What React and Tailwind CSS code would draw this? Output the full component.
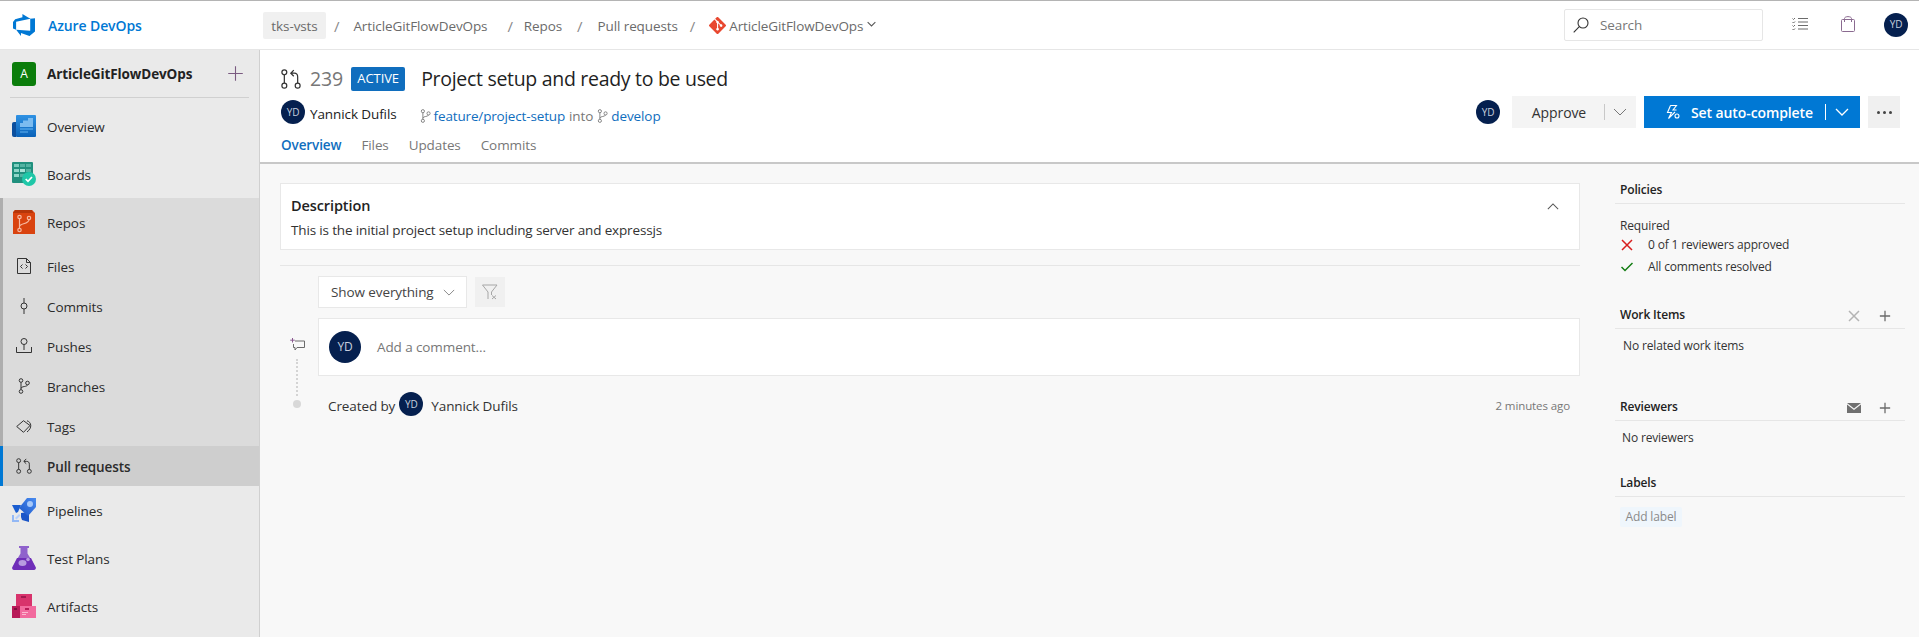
import React from "react";

const Avatar = ({ size = "w-6 h-6 text-[10px]" }) => (
  <div className={`${size} rounded-full bg-[#05204f] text-[#c8d0de] flex items-center justify-center shrink-0`}>YD</div>
);

const PrIcon = ({ className, color = "#333" }) => (
  <svg viewBox="0 0 18 18" className={className} fill="none" stroke={color} strokeWidth="1.100">
    <circle cx="3" cy="3" r="2.200" />
    <circle cx="3" cy="15" r="2.200" />
    <circle cx="15" cy="15" r="2.200" />
    <path d="M3 5.200v7.600M15 12.800V7C15 5 14 3.800 12 3.800H9M11.500 1 8.800 3.800l2.700 2.700" />
  </svg>
);

const BranchIcon = ({ className, color = "#666" }) => (
  <svg viewBox="0 0 12 16" className={className} fill="none" stroke={color} strokeWidth="1">
    <circle cx="3" cy="2.500" r="1.800" />
    <circle cx="3" cy="13.500" r="1.800" />
    <circle cx="9.500" cy="5" r="1.800" />
    <path d="M3 4.300v7.400M3 10.500c0-2.500 6.500-1.500 6.500-3.700" />
  </svg>
);

const Chevron = ({ className, color = "#666", w = 1 }) => (
  <svg viewBox="0 0 14 8" className={className} fill="none" stroke={color} strokeWidth={w}>
    <path d="M1 1l6 6 6-6" />
  </svg>
);

const PlusIcon = ({ className, color = "#6b6b6b", w = 1.5 }) => (
  <svg viewBox="0 0 14 14" className={className} fill="none" stroke={color} strokeWidth={w}>
    <path d="M7 1v12M1 7h12" />
  </svg>
);

const Crumb = ({ children }) => <span className="text-[#6b6b6b] pt-[2px]">{children}</span>;
const Slash = ({ className }) => <span className={`text-[#8a8a8a] text-[15px] pt-[2px] ${className}`}>/</span>;

const OverviewIcon = () => (
  <svg viewBox="0 0 24 22" className="w-6 h-[22px]">
    <defs>
      <linearGradient id="ovg" x1="0" y1="0" x2="0" y2="1">
        <stop offset="0" stopColor="#2f92e4" />
        <stop offset="1" stopColor="#0a62b8" />
      </linearGradient>
    </defs>
    <rect x="4" width="20" height="22" rx="1" fill="url(#ovg)" />
    <path d="M0 9a2 2 0 0 1 2-2h2v15H2a2 2 0 0 1-2-2z" fill="#0b4f9e" />
    <path d="M16 3h5v9H8V8h3V5.500h5z" fill="#7cbcf0" />
    <rect x="8" y="13" width="13" height="2" fill="#3f97e0" />
    <rect x="8" y="16" width="8" height="2" fill="#3a8fd8" />
  </svg>
);
const BoardsIcon = () => (
  <svg viewBox="0 0 24 24" className="w-6 h-6">
    <rect width="21" height="21" rx="1" fill="#20907e" />
    <rect x="2" y="2" width="5" height="3" fill="#7ccdbe" />
    <rect x="8" y="2" width="5" height="3" fill="#52b3a2" />
    <rect x="14" y="2" width="5" height="3" fill="#52b3a2" />
    <rect x="2" y="7" width="5" height="3" fill="#8ed6c9" />
    <rect x="8" y="7" width="5" height="3" fill="#a6e2d7" />
    <rect x="14" y="7" width="5" height="3" fill="#52b3a2" />
    <rect x="2" y="12" width="5" height="3" fill="#8ed6c9" />
    <rect x="8" y="12" width="5" height="3" fill="#52b3a2" />
    <circle cx="17" cy="17" r="7" fill="#1fc7a8" />
    <path d="M13.700 17l2.300 2.300 4-4.300" stroke="#fff" strokeWidth="1.700" fill="none" />
  </svg>
);
const ReposIcon = () => (
  <svg viewBox="0 0 22 24" className="w-[22px] h-6">
    <path d="M2 0h17l3 3v21H0V2z" fill="#d9430f" />
    <path d="M2 0h17l1 3H0z" fill="#b5360a" />
    <g fill="none" stroke="#f7b9a2" strokeWidth="1.200">
      <circle cx="6.500" cy="7" r="1.700" />
      <circle cx="6.500" cy="20" r="1.700" />
      <circle cx="16" cy="8" r="1.700" />
      <path d="M6.500 8.700v9.600M6.500 16.500c0-3 9.500-2.500 9.500-6.800" />
    </g>
  </svg>
);
const FilesIcon = () => (
  <svg viewBox="0 0 14 16" className="w-[14px] h-4" fill="none" stroke="#333" strokeWidth="1">
    <path d="M.5.500h9l4 4v11H.5zM9.500.500v4h4" />
    <path d="M5.500 6.500 3.500 8.500l2 2M8.500 6.500l2 2-2 2" />
  </svg>
);
const CommitsIcon = () => (
  <svg viewBox="0 0 8 16" className="w-2 h-4" fill="none" stroke="#333" strokeWidth="1">
    <circle cx="4" cy="8" r="3" />
    <path d="M4 0v5M4 11v5" />
  </svg>
);
const PushesIcon = () => (
  <svg viewBox="0 0 16 16" className="w-4 h-4" fill="none" stroke="#333" strokeWidth="1">
    <circle cx="8" cy="3.500" r="3" />
    <path d="M8 6.500V12M.5 9v5.500h15V9" />
  </svg>
);
const TagsIcon = () => (
  <svg viewBox="0 0 16 13" className="w-4 h-[13px]" fill="none" stroke="#333" strokeWidth="1">
    <path d="M.7 6.500 7.500.7 14 5.500 7.500 12.300z" />
    <path d="M11 .8c4.500 1.200 5.500 7.200 0 11.200" />
  </svg>
);
const PipelinesIcon = () => (
  <svg viewBox="0 0 24 24" className="w-6 h-6">
    <defs>
      <linearGradient id="pig" x1="1" y1="0" x2="0" y2="1">
        <stop offset="0" stopColor="#4a8cf0" />
        <stop offset="1" stopColor="#1a55c8" />
      </linearGradient>
    </defs>
    <path d="M0 7h9l-3 7-2 1z" fill="#1a5dd0" />
    <path d="M9 15l8-1v10l-7-2-1-3z" fill="#1a55c8" />
    <path d="M24 0v9l-8 9-9-8 8-10z" fill="url(#pig)" />
    <circle cx="18" cy="6" r="3" fill="#a6c8fa" />
    <path d="M0 17v7h7v-2H2v-5z" fill="#93b8f5" />
    <path d="M3 20l4-4 1.500 1.500-4 4z" fill="#b8d0fa" />
  </svg>
);
const TestIcon = () => (
  <svg viewBox="0 0 24 24" className="w-6 h-6">
    <path d="M7 0h10v2h-1.500v5.500L23.500 21c.7 1.500-.3 3-2 3h-19c-1.700 0-2.700-1.500-2-3L8.500 7.500V2H7z" fill="#8f62cc" />
    <path d="M5 12h14l4.500 9c.7 1.500-.3 3-2 3h-19c-1.700 0-2.700-1.500-2-3z" fill="#6f2eb8" />
    <ellipse cx="10.500" cy="17" rx="4" ry="3" fill="#b89be0" />
    <circle cx="16" cy="13.500" r="1.800" fill="#b89be0" />
  </svg>
);
const ArtifactsIcon = () => (
  <svg viewBox="0 0 24 24" className="w-6 h-6">
    <rect x="4" width="16" height="12" fill="#d8336c" />
    <rect y="12" width="8" height="12" fill="#b81a58" />
    <rect x="8" y="12" width="16" height="12" fill="#f26a9e" />
    <rect x="9" y="2" width="5" height="2" fill="#a01a4e" />
    <rect x="13" y="14" width="4" height="2" fill="#b81a58" />
    <rect x="10" y="18" width="6" height="1" fill="#fbb8d0" />
    <rect x="10" y="20" width="4" height="1" fill="#fbb8d0" />
    <rect x="2" y="14" width="3" height="2" fill="#7e0f3c" />
  </svg>
);

const NavItem = ({ icon, label, h = "h-12", active, weight, strip }) => (
  <div className={`${h} flex items-center ${active ? "bg-[#cecece] border-l-[3px] border-[#0078d4]" : strip ? "border-l-[3px] border-[#aeaeae]" : "border-l-[3px] border-transparent"}`}>
    <div className="w-[44px] pl-[9px] flex items-center shrink-0">
      <span className="w-6 flex items-center justify-center">{icon}</span>
    </div>
    <span className={`text-[#2b2b2b] pt-[2px] ${weight || ""}`}>{label}</span>
  </div>
);

const Section = ({ title, actions, className, children }) => (
  <div className={className}>
    <div className="h-[24px] border-b border-[#e6e6e6] flex items-center justify-between">
      <span className="font-semibold text-[12px] text-[#222] pl-[5px] pb-[4px]">{title}</span>
      {actions}
    </div>
    {children}
  </div>
);

export default function App() {
  return (
    <div className="h-[637px] w-full overflow-hidden flex flex-col bg-[#f8f8f8] font-['Open_Sans','Liberation_Sans',sans-serif] text-[13.500px] tracking-[-0.1px] text-[#333]">
      {/* Top bar */}
      <header className="h-[50px] shrink-0 bg-white border-t border-t-[#b4b4b4] border-b border-b-[#e6e6e6] flex items-center">
        <div className="w-[263px] shrink-0 flex items-center pl-[13px]">
          <svg viewBox="1 1 16 16" className="w-[22px] h-[22px]" fill="#0078d4">
            <path d="M17 4v9.740l-4 3.280-6.200-2.260V17L3.290 12.410l10.230.8V4.440Zm-3.410.49L7.850 1V3.290L2.580 4.840 1 6.870v4.610l2.260 1V6.570Z" />
          </svg>
          <span className="ml-[13px] font-semibold text-[14px] text-[#0078d4] pt-[1px]">Azure DevOps</span>
        </div>
        <div className="flex items-center flex-1">
          <div className="w-[63px] h-[27px] bg-[#f0f0f0] rounded-[2px] flex items-center justify-center"><Crumb>tks-vsts</Crumb></div>
          <Slash className="ml-[8px] mr-[14px]" />
          <Crumb>ArticleGitFlowDevOps</Crumb>
          <Slash className="ml-[20px] mr-[11px]" />
          <Crumb>Repos</Crumb>
          <Slash className="ml-[15px] mr-[15px]" />
          <Crumb>Pull requests</Crumb>
          <Slash className="ml-[12px] mr-[14px]" />
          <svg viewBox="0 0 92 92" className="w-[17px] h-[17px] mr-[3px]">
            <path fill="#e8472f" d="M90.200 41.900 50.100 1.800a5.900 5.900 0 0 0-8.400 0L33.400 10.100l10.600 10.600a7 7 0 0 1 8.900 8.900l10.200 10.200a7 7 0 1 1-4.200 4l-9.500-9.500v25a7 7 0 1 1-5.800-.2V33.900a7 7 0 0 1-3.800-9.200L29.300 14.200 1.800 41.700a5.900 5.900 0 0 0 0 8.400l40.100 40.100a5.900 5.900 0 0 0 8.400 0l39.900-39.900a5.900 5.900 0 0 0 0-8.400z" />
          </svg>
          <Crumb>ArticleGitFlowDevOps</Crumb>
          <Chevron className="w-[9px] h-[6px] ml-[4px] -mt-[3px]" color="#555" w={1.6} />
        </div>
        <div className="w-[199px] h-[32px] border border-[#e6e6e6] rounded-[2px] flex items-center pl-[8px] mr-[29px]">
          <svg viewBox="0 0 16 16" className="w-4 h-4" fill="none" stroke="#333" strokeWidth="1.100">
            <circle cx="10" cy="6" r="5" />
            <path d="M6.300 9.700.7 15.300" />
          </svg>
          <span className="ml-[11px] text-[#777] pt-[1px]">Search</span>
        </div>
        <svg viewBox="0 0 16 14" className="w-4 h-[14px] mr-[33px] -mt-[2px]" fill="none" stroke="#6b6b6b" strokeWidth="1">
          <path d="M6 1.500h10M6 5h10M6 8.500h10M6 12h10" />
          <path d="M.5 1.500l1 1 1.500-1.500M.5 5l1 1 1.500-1.500M.5 8.500l1 1L3 8M.5 12l1 1 1.500-1.500" />
        </svg>
        <svg viewBox="0 0 14 16" className="w-[14px] h-4 mr-[29px] -mt-[2px]" fill="none" stroke="#8a6a90" strokeWidth="1">
          <rect x=".5" y="3.500" width="13" height="12" rx="1" />
          <path d="M3.500 6V2.500c0-2.500 7-2.500 7 0V6" />
        </svg>
        <div className="mr-[11px] -mt-[1px]"><Avatar /></div>
      </header>

      <div className="flex flex-1 min-h-0">
        {/* Sidebar */}
        <aside className="w-[260px] shrink-0 bg-[#eaeaea] border-r border-[#d0d0d0] flex flex-col">
          <div className="h-[48px] mx-[10px] mb-[4px] border-b border-[#d0d0d0] flex items-center shrink-0">
            <div className="w-6 h-6 ml-[2px] bg-[#0b7d0b] rounded-[3px] text-white flex items-center justify-center text-[12px]">A</div>
            <span className="ml-[11px] font-bold text-[#222] flex-1 pt-[1px]">ArticleGitFlowDevOps</span>
            <PlusIcon className="w-[17px] h-[17px] mr-[5px]" color="#7a5a80" w={0.9} />
          </div>
          <NavItem icon={<OverviewIcon />} label="Overview" />
          <NavItem icon={<BoardsIcon />} label="Boards" />
          <div className="bg-[#dbdbdb]">
            <NavItem strip icon={<ReposIcon />} label="Repos" weight="font-medium" />
            <NavItem strip h="h-10" icon={<FilesIcon />} label="Files" />
            <NavItem strip h="h-10" icon={<CommitsIcon />} label="Commits" />
            <NavItem strip h="h-10" icon={<PushesIcon />} label="Pushes" />
            <NavItem strip h="h-10" icon={<BranchIcon className="w-3 h-4" color="#333" />} label="Branches" />
            <NavItem strip h="h-10" icon={<TagsIcon />} label="Tags" />
            <NavItem active h="h-10" icon={<PrIcon className="w-4 h-4" />} label="Pull requests" weight="font-semibold" />
          </div>
          <NavItem icon={<PipelinesIcon />} label="Pipelines" />
          <NavItem icon={<TestIcon />} label="Test Plans" />
          <NavItem icon={<ArtifactsIcon />} label="Artifacts" />
        </aside>

        <main className="flex-1 min-w-0 flex flex-col">
          {/* PR header */}
          <div className="h-[114px] shrink-0 bg-white border-b-2 border-[#c8c8c8] flex pl-[21px] pr-[19px]">
            <div className="flex-1 pt-[17px]">
              <div className="h-6 flex items-center">
                <PrIcon className="w-5 h-5 shrink-0" />
                <span className="ml-[9px] text-[19.500px] leading-6 text-[#777]">239</span>
                <span className="ml-[8px] w-[54px] h-6 bg-[#106ebe] rounded-[2px] text-white flex items-center justify-center text-[13px]">ACTIVE</span>
                <span className="ml-[16px] text-[19.500px] tracking-[-0.3px] leading-6 text-[#1f1f1f]">Project setup and ready to be used</span>
              </div>
              <div className="h-6 mt-[9px] flex items-center">
                <Avatar />
                <span className="ml-[5px] text-[#222] pt-[5px]">Yannick Dufils</span>
                <BranchIcon className="w-[11px] h-[14px] ml-[23px] mt-[8px] shrink-0" color="#777" />
                <span className="ml-[3px] text-[#106ebe] pt-[8px] tracking-[-0.15px]">feature/project-setup</span>
                <span className="ml-[4px] text-[#777] pt-[8px]">into</span>
                <BranchIcon className="w-[11px] h-[14px] ml-[4px] mt-[8px] shrink-0" color="#777" />
                <span className="ml-[3px] text-[#106ebe] pt-[8px]">develop</span>
              </div>
              <div className="mt-[11px] flex items-center gap-[20px] text-[#777]">
                <span className="font-semibold text-[#106ebe]">Overview</span>
                <span>Files</span>
                <span>Updates</span>
                <span>Commits</span>
              </div>
            </div>
            <div className="pt-[46px] flex items-start">
              <div className="mt-[4px] mr-[12px]"><Avatar /></div>
              <div className="w-[124px] h-8 bg-[#f4f4f4] flex items-center">
                <span className="w-[92px] text-center text-[14px] text-[#333] pl-[2px] pt-[1px]">Approve</span>
                <span className="w-px h-4 bg-[#c8c8c8]" />
                <Chevron className="w-[14px] h-2 ml-[8px]" color="#777" />
              </div>
              <div className="ml-[8px] w-[216px] h-8 bg-[#0078d4] text-white flex items-center">
                <svg viewBox="0 0 14 14" className="w-[14px] h-[14px] ml-[22px]" fill="none" stroke="#fff" strokeWidth="1.100">
                  <path d="M4.500.5h6L7 5h3.500M4.500.5 1.500 7.500h4L2.500 13.500 9 7" />
                  <circle cx="11" cy="11" r="2" />
                </svg>
                <span className="ml-[11px] font-semibold text-[14px] w-[126px] whitespace-nowrap pt-[1px]">Set auto-complete</span>
                <span className="ml-[8px] w-px h-4 bg-white" />
                <Chevron className="w-[14px] h-2 ml-[9px]" color="#fff" w={1.3} />
              </div>
              <div className="ml-[8px] w-8 h-8 bg-[#f0f0f0] flex items-center justify-center gap-[3px]">
                <span className="w-[3px] h-[3px] rounded-full bg-[#444]" />
                <span className="w-[3px] h-[3px] rounded-full bg-[#444]" />
                <span className="w-[3px] h-[3px] rounded-full bg-[#444]" />
              </div>
            </div>
          </div>

          {/* Body */}
          <div className="flex-1 flex min-h-0 pl-[20px]">
            <div className="w-[1300px] pt-[19px] shrink-0">
              <div className="h-[67px] bg-white border border-[#e8e8e8] pl-[10px] pr-[15px] flex flex-col">
                <div className="flex items-center justify-between mt-[12px]">
                  <span className="text-[14.500px] leading-5 font-semibold text-[#222]">Description</span>
                  <Chevron className="w-[12px] h-[7px] rotate-180 mr-[5px]" color="#555" w={1.2} />
                </div>
                <span className="mt-[5px] leading-[18px] tracking-[-0.15px] text-[#333]">This is the initial project setup including server and expressjs</span>
              </div>
              <div className="h-px bg-[#e6e6e6] mt-[15px]" />
              <div className="ml-[38px] mt-[10px] flex items-center">
                <div className="w-[149px] h-[32px] bg-white border border-[#e8e8e8] flex items-center pl-[12px]">
                  <span className="text-[#444] w-[112px] shrink-0">Show everything</span>
                  <Chevron className="w-[12px] h-[7px]" color="#777" />
                </div>
                <div className="ml-[8px] w-[30px] h-[30px] bg-[#f0f0f0] flex items-center justify-center">
                  <svg viewBox="0 0 16 16" className="w-4 h-4" fill="none" stroke="#a6a6a6" strokeWidth="1">
                    <path d="M.5 1h14.500L9.500 8v3M6 15V8L.5 1M10 11.500l4 3.500M14 11.500 10 15" />
                  </svg>
                </div>
              </div>
              <div className="flex mt-[10px]">
                <div className="w-[38px] shrink-0 flex flex-col items-center pr-[4px]">
                  <svg viewBox="0 0 15 14" className="w-[15px] h-[14px] mt-[20px] ml-[1px]" fill="none" stroke="#6b6b6b" strokeWidth="1">
                    <path d="M5 3h9.500v6.500H7L5 12V9.500H3.500V6" />
                    <path d="M2.500 0v4.500M.2 2.200h4.600" stroke="#8a5a90" />
                  </svg>
                  <div className="mt-[7px] h-[37px] border-l-2 border-dotted border-[#d4d4d4]" />
                  <div className="mt-[4px] w-2 h-2 rounded-full bg-[#d8d8d8]" />
                </div>
                <div className="flex-1">
                  <div className="h-[58px] bg-white border border-[#e8e8e8] flex items-center pl-[10px]">
                    <Avatar size="w-8 h-8 text-[12px]" />
                    <span className="ml-[16px] text-[#777]">Add a comment...</span>
                  </div>
                  <div className="mt-[16px] h-6 flex items-center pl-[10px] pr-[10px]">
                    <span className="text-[#333] pt-[4px]">Created by</span>
                    <div className="ml-[4px]"><Avatar /></div>
                    <span className="ml-[8px] text-[#333] pt-[4px]">Yannick Dufils</span>
                    <span className="ml-auto text-[11.500px] text-[#777] pt-[4px]">2 minutes ago</span>
                  </div>
                </div>
              </div>
            </div>

            <div className="w-[290px] ml-[35px] shrink-0 pt-[16px] text-[12px] tracking-[-0.15px] text-[#333]">
              <Section title="Policies">
                <div className="pl-[5px] pt-[13px] leading-[18px]">Required</div>
                <div className="flex items-center h-[18px] mt-[1px] pl-[6px]">
                  <svg viewBox="0 0 12 12" className="w-3 h-3" fill="none" stroke="#d81e1e" strokeWidth="1.500"><path d="M1 1l10 10M11 1 1 11" /></svg>
                  <span className="ml-[15px]">0 of 1 reviewers approved</span>
                </div>
                <div className="flex items-center h-[18px] mt-[4px] pl-[6px]">
                  <svg viewBox="0 0 12 10" className="w-3 h-[10px]" fill="none" stroke="#107c10" strokeWidth="1.500"><path d="M.5 5l3.500 3.500L11.500 1" /></svg>
                  <span className="ml-[15px]">All comments resolved</span>
                </div>
              </Section>
              <Section title="Work Items" className="mt-[29px]" actions={
                <div className="flex items-center pb-[2px] pr-[14px]">
                  <svg viewBox="0 0 12 12" className="w-3 h-3" fill="none" stroke="#b4b4b4" strokeWidth="1.500"><path d="M1 1l10 10M11 1 1 11" /></svg>
                  <PlusIcon className="w-3 h-3 ml-[19px]" />
                </div>
              }>
                <div className="pl-[8px] pt-[8px] leading-[18px]">No related work items</div>
              </Section>
              <Section title="Reviewers" className="mt-[42px]" actions={
                <div className="flex items-center pb-[2px] pr-[14px]">
                  <svg viewBox="0 0 14 10" className="w-[14px] h-[10px]" fill="#707070"><path d="M0 0h14L7 5.500zM0 1.500 7 7l7-5.500V10H0z" /></svg>
                  <PlusIcon className="w-3 h-3 ml-[18px]" />
                </div>
              }>
                <div className="pl-[7px] pt-[8px] leading-[18px]">No reviewers</div>
              </Section>
              <Section title="Labels" className="mt-[26px]">
                <div className="ml-[5px] mt-[10px] w-[62px] h-5 bg-[#eff6fc] rounded-[2px] text-[#8a8a8a] flex items-center justify-center">Add label</div>
              </Section>
            </div>
          </div>
        </main>
      </div>
    </div>
  );
}
